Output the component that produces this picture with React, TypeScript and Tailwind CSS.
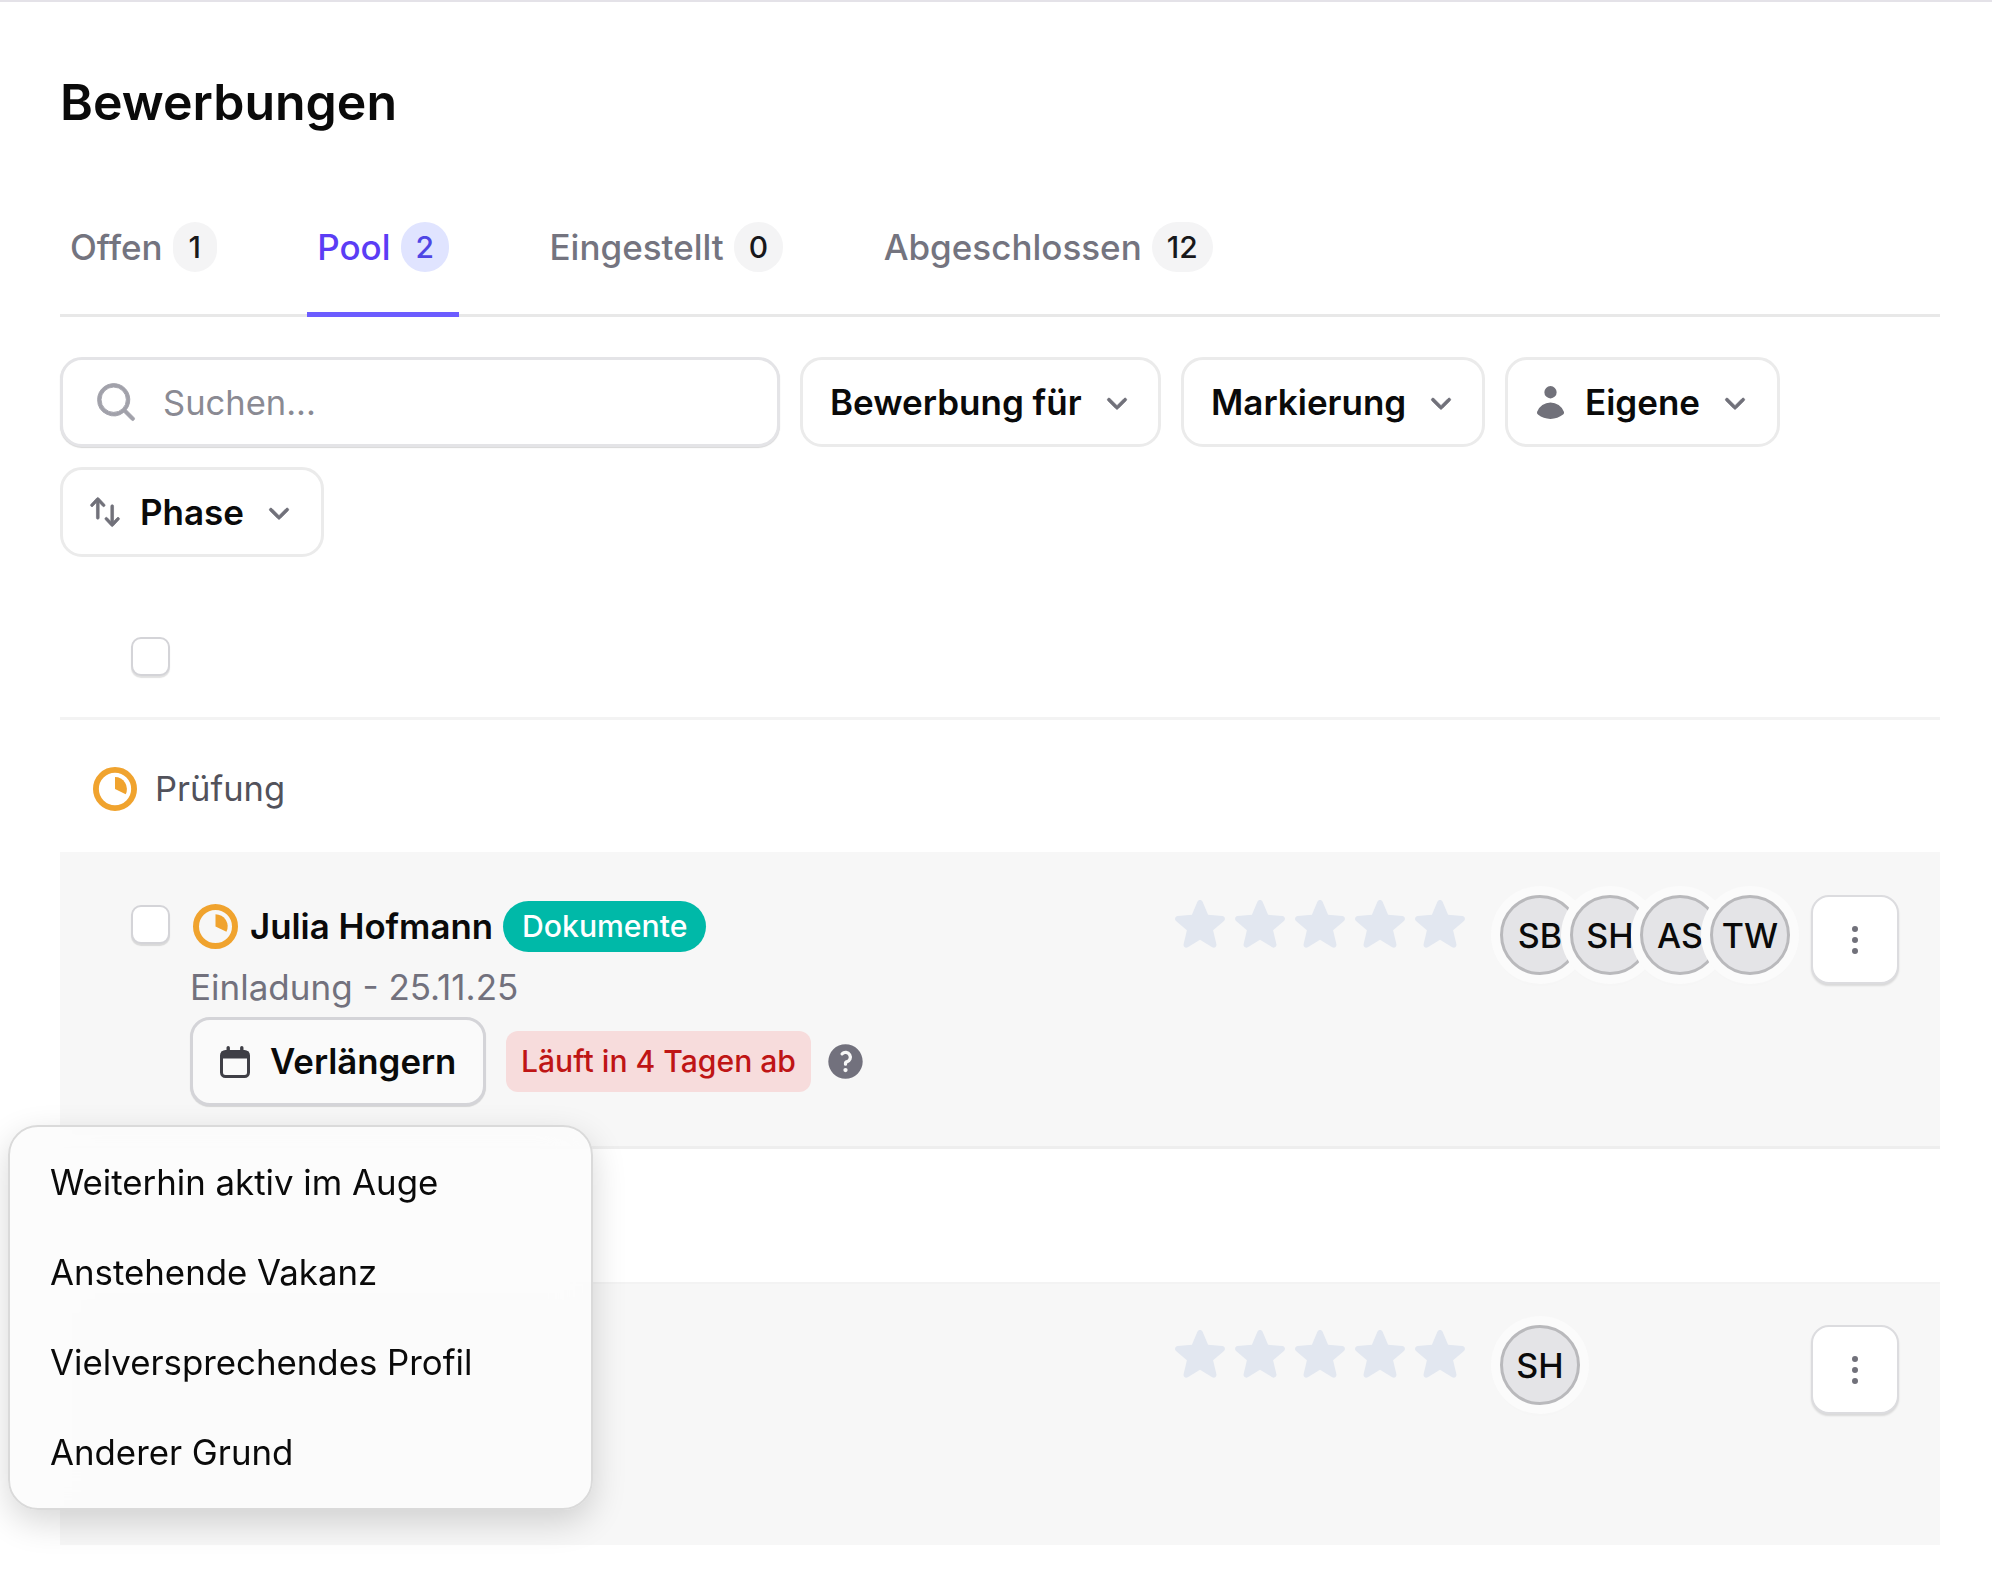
import { HiMiniChevronDown, HiMiniMagnifyingGlass, HiMiniUser, HiMiniArrowsUpDown, HiMiniStar, HiMiniQuestionMarkCircle, HiMiniEllipsisVertical } from "react-icons/hi2";

const tabs = [
  { name: "Offen", count: 1 },
  { name: "Pool", count: 2, active: true },
  { name: "Eingestellt", count: 0 },
  { name: "Abgeschlossen", count: 12 },
];

const reasons = ["Weiterhin aktiv im Auge", "Anstehende Vakanz", "Vielversprechendes Profil", "Anderer Grund"];

const ClockIcon = ({ className }: { className: string }) => (
  <svg viewBox="0 0 24 24" className={className} fill="none">
    <circle cx="12" cy="12" r="10.4" stroke="#f0a32e" strokeWidth="3.2" />
    <path d="M12 12V5.5A6.5 6.5 0 0 1 17.84 14.85Z" fill="#f0a32e" />
  </svg>
);

const CalendarIcon = () => (
  <svg viewBox="0 0 30 32" className="w-[30px] h-[32px] shrink-0">
    <rect x="1.5" y="5.5" width="27" height="25" rx="4" fill="none" stroke="#3f3f46" strokeWidth="3" />
    <rect x="1.5" y="5.5" width="27" height="7" fill="#3f3f46" />
    <rect x="6.5" y="0" width="3.4" height="7" rx="1.7" fill="#3f3f46" />
    <rect x="20.1" y="0" width="3.4" height="7" rx="1.7" fill="#3f3f46" />
  </svg>
);

const Checkbox = () => (
  <div className="w-[39px] h-[39px] shrink-0 rounded-[10px] bg-white border-[2px] border-[#d4d4d8] shadow-[0_2px_1px_rgba(0,0,0,0.12)]" />
);

const FilterButton = ({ label, icon, className }: { label: string; icon?: React.ReactNode; className: string }) => (
  <button className={`h-[90px] flex items-center rounded-[22px] border-[3px] border-[#ebebeb] bg-white text-[35px] font-semibold text-[#0a0a0a] ${className}`}>
    {icon}
    <span>{label}</span>
    <HiMiniChevronDown className="w-[38px] h-[38px] text-[#71717a] ml-[16px]" stroke="currentColor" strokeWidth="0.5" />
  </button>
);

const Stars = () => (
  <div className="flex w-[300px] shrink-0 -mt-[2px]">
    {[1, 2, 3, 4, 5].map((i) => (
      <HiMiniStar key={i} className="w-[60px] h-[60px] text-[#e2e7f0]" />
    ))}
  </div>
);

const Avatars = ({ names }: { names: string[] }) => (
  <div className="flex w-[311px] ml-[30px] shrink-0">
    {names.map((n, i) => (
      <div
        key={n}
        className={`relative w-[80px] h-[80px] rounded-full flex items-center justify-center bg-[#e4e4e7] border-[3px] border-[#b9b9bc] shadow-[0_0_0_9px_#fbfbfb,0_5px_10px_rgba(0,0,0,0.05)] text-[34px] font-medium text-[#0a0a0a] ${i > 0 ? "-ml-[10px]" : ""}`}
      >
        {n}
      </div>
    ))}
  </div>
);

const MenuButton = () => (
  <button className="w-[88px] h-[89px] shrink-0 rounded-[18px] bg-white border-[2px] border-[#dcdcdf] shadow-[0_2px_2px_rgba(0,0,0,0.12)] flex items-center justify-center">
    <HiMiniEllipsisVertical className="w-[40px] h-[40px] text-[#71717a]" />
  </button>
);

export default function App() {
  return (
    <div className="relative min-h-[1576px] bg-white border-t-2 border-[#e4e2e8] pt-[70px] pl-[60px] pr-[52px] overflow-hidden font-['Inter',sans-serif]">
      <h1 className="text-[50px] leading-[60px] font-semibold text-[#0a0a0a]">Bewerbungen</h1>

      {/* Tabs */}
      <div className="mt-[90px] flex gap-[80.5px] border-b-[3px] border-[#e8e8e8]">
        {tabs.map((t) => (
          <div
            key={t.name}
            className={`flex items-center gap-[10px] px-[10px] pb-[40px] -mb-[3px] border-b-[5px] text-[35px] leading-[50px] font-medium ${t.active ? "border-[#6c5cff] text-[#5b3df5]" : "border-transparent text-[#74747f]"}`}
          >
            <span>{t.name}</span>
            <span
              className={`h-[50px] min-w-[44px] px-[15px] rounded-full flex items-center justify-center text-[30px] ${t.active ? "bg-[#e0e4ff] text-[#4f46e5]" : "bg-[#f4f4f5] text-[#18181b]"}`}
            >
              {t.count}
            </span>
          </div>
        ))}
      </div>

      {/* Filters */}
      <div className="mt-[40px] flex flex-wrap gap-[20px]">
        <div className="w-[720px] h-[90px] flex items-center rounded-[22px] border-[3px] border-[#e4e4e7] bg-white shadow-[0_1px_1px_rgba(0,0,0,0.16)] pl-[30px]">
          <HiMiniMagnifyingGlass className="w-[46px] h-[46px] text-[#a1a1aa] shrink-0" stroke="currentColor" strokeWidth="0.4" />
          <input placeholder="Suchen..." className="ml-[24px] flex-1 outline-none text-[34.5px] relative top-[1px] placeholder:text-[#8a8a93]" />
        </div>
        <FilterButton label="Bewerbung für" className="w-[361px] pl-[27px]" />
        <FilterButton label="Markierung" className="w-[304px] pl-[27px]" />
        <FilterButton
          label="Eigene"
          className="w-[275px] pl-[22px]"
          icon={<HiMiniUser className="w-[41px] h-[41px] text-[#71717a] mr-[14px]" />}
        />
        <FilterButton
          label="Phase"
          className="w-[264px] pl-[24px]"
          icon={<HiMiniArrowsUpDown className="w-[36px] h-[36px] text-[#71717a] mr-[17px]" stroke="currentColor" strokeWidth="0.4" />}
        />
      </div>

      <div className="mt-[80px] pl-[71px] pb-[41px] border-b-[3px] border-[#f3f3f3]">
        <Checkbox />
      </div>

      <div className="h-[132px] flex items-center pt-[6px] pl-[33px] gap-[18px] text-[34.5px] text-[#52525b]">
        <ClockIcon className="w-[44px] h-[44px]" />
        <span>Prüfung</span>
      </div>

      {/* Candidate */}
      <div className="h-[297px] flex bg-[#f7f7f7] border-b-[3px] border-[#eeeeee] pl-[71px] pr-[41px]">
        <div className="mt-[53px]">
          <Checkbox />
        </div>
        <div className="ml-[20px] mt-[49px] flex-1">
          <div className="flex items-center h-[51px]">
            <ClockIcon className="w-[45px] h-[45px] ml-[3px]" />
            <span className="ml-[12px] text-[34.8px] font-semibold text-[#0a0a0a]">Julia Hofmann</span>
            <span className="ml-[10px] h-[51px] px-[19px] rounded-full bg-[#00b9a8] text-white flex items-center text-[30.2px] font-medium">Dokumente</span>
          </div>
          <div className="mt-[10px] text-[35px] leading-[50px] text-[#72717d]">Einladung - 25.11.25</div>
          <div className="mt-[5px] flex items-center">
            <button className="w-[296px] h-[89px] flex items-center gap-[20px] pl-[27px] rounded-[20px] border-[3px] border-[#d4d4d8] bg-[#fafafa] shadow-[0_1px_1px_rgba(0,0,0,0.14)] text-[34.8px] font-semibold text-[#0a0a0a]">
              <CalendarIcon />
              Verlängern
            </button>
            <span className="ml-[20px] h-[61px] px-[15px] rounded-[12px] bg-[#f7dcdc] text-[#bf1515] flex items-center text-[30.1px] font-medium">Läuft in 4 Tagen ab</span>
            <HiMiniQuestionMarkCircle className="ml-[13px] w-[43px] h-[43px] text-[#72717d]" />
          </div>
        </div>
        <div className="flex items-start pt-[43px]">
          <Stars />
          <Avatars names={["SB", "SH", "AS", "TW"]} />
          <MenuButton />
        </div>
      </div>

      <div className="h-[133px]" />

      <div className="h-[263px] flex justify-end bg-[#f7f7f7] border-t-[2px] border-[#f3f3f3] pr-[41px]">
        <div className="flex items-start pt-[41px]">
          <Stars />
          <Avatars names={["SH"]} />
          <MenuButton />
        </div>
      </div>

      {/* Reason menu */}
      <div className="absolute left-[8px] top-[1123px] w-[585px] h-[385px] py-[10px] rounded-[30px] border-[2px] border-[#dadada] bg-[#fcfcfc]/85 backdrop-blur-xl shadow-[0_12px_34px_rgba(0,0,0,0.16)]">
        {reasons.map((r) => (
          <div key={r} className="h-[90px] flex items-center pl-[40px] text-[34.8px] text-[#0a0a0a]">{r}</div>
        ))}
      </div>
    </div>
  );
}
